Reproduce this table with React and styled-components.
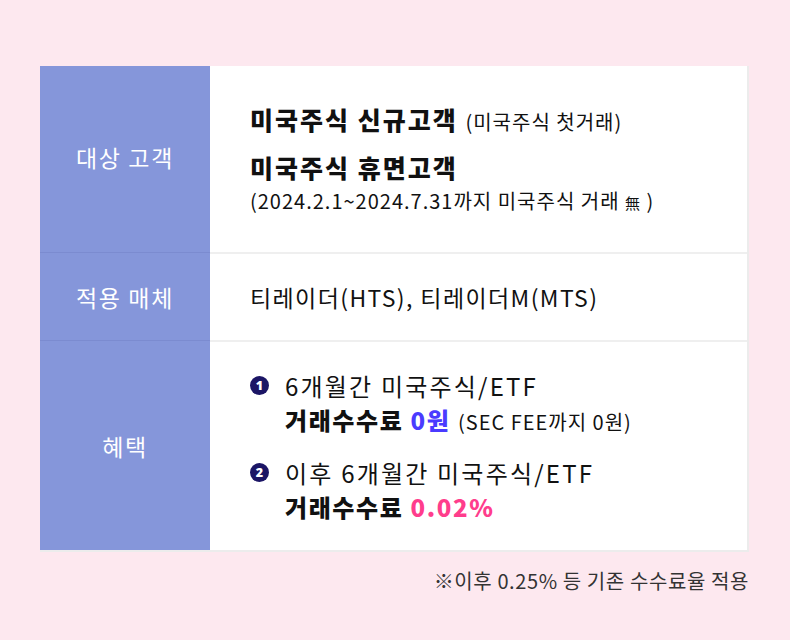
import styled, { createGlobalStyle } from 'styled-components';

const GlobalStyle = createGlobalStyle`
    html, body { margin: 0; padding: 0; }
    body {
        background: #fde8ef;
        font-family: "Noto Sans CJK KR", "Noto Sans", sans-serif;
        color: #111;
    }
`

const Page = styled.div`
    width: 790px;
    height: 640px;
    box-sizing: border-box;
    padding: 66px 41px 0 40px;
`

const Table = styled.div`
    display: grid;
    grid-template-columns: 170px 1fr;
    grid-template-rows: 186px 88px 210px;
    background: #fff;
    border-right: 2px solid #ececec;
    border-bottom: 2px solid #ececec;
`

const Head = styled.div`
    background: #8596da;
    color: #fff;
    font-size: 23px;
    letter-spacing: 1.6px;
    display: flex;
    align-items: center;
    justify-content: center;
    padding-bottom: ${p => (p.$first ? 4 : 0)}px;
    border-top: ${p => (p.$first ? 'none' : '1px solid #7b8bd0')};
`

const Cell = styled.div`
    display: flex;
    flex-direction: column;
    justify-content: center;
    padding-left: 40px;
    border-top: ${p => (p.$first ? 'none' : '2px solid #efefef')};
`

const Strong = styled.div`
    font-size: 25px;
    font-weight: 900;
    letter-spacing: 2px;
    line-height: 34px;
    margin-top: ${p => p.$gap || 0}px;
`

const Small = styled.span`
    font-size: ${p => p.$size || 20}px;
    font-weight: 400;
    letter-spacing: 1px;
`

const Note = styled.div`
    font-size: 20px;
    letter-spacing: 1px;
    line-height: 28px;
    margin-top: 3px;
`

const Plain = styled.div`
    font-size: 23px;
    letter-spacing: 1.4px;
`

const Benefit = styled.div`
    display: flex;
    align-items: flex-start;
    margin-top: ${p => p.$gap || 0}px;
`

const NumIcon = styled.svg`
    flex: none;
    display: block;
    width: 19px;
    height: 19px;
    margin: 7px 16px 0 0;
`

const Lines = styled.div`
    font-size: 24px;
    letter-spacing: 2.2px;
    line-height: 34px;
`

const Bold = styled.span`
    font-weight: 900;
    letter-spacing: 1.6px;
    color: ${p => p.$color || '#111'};
`

const Extra = styled.span`
    font-size: 20px;
    letter-spacing: 1px;
`

const Footer = styled.div`
    text-align: right;
    font-size: 20px;
    color: #333;
    letter-spacing: 0.6px;
    margin-top: 14px;
`

function Num({ n }){
    return(
        <NumIcon viewBox="0 0 19 19">
            <circle cx="9.5" cy="9.5" r="9.5" fill="#1b1565" />
            <text x="9.5" y="14" textAnchor="middle" fill="#fff" fontSize="12.5" fontWeight="900"
                fontFamily="'Noto Sans', sans-serif">{n}</text>
        </NumIcon>
    )
}

export default function App(){
    return(
        <>
        <GlobalStyle />
        <Page>
            <Table>
                <Head $first>대상 고객</Head>
                <Cell $first>
                    <Strong>미국주식 신규고객 <Small>(미국주식 첫거래)</Small></Strong>
                    <Strong $gap={11}>미국주식 휴면고객</Strong>
                    <Note>(2024.2.1~2024.7.31까지 미국주식 거래 <Small $size={15}>無</Small> )</Note>
                </Cell>

                <Head>적용 매체</Head>
                <Cell>
                    <Plain>티레이더(HTS), 티레이더M(MTS)</Plain>
                </Cell>

                <Head>혜택</Head>
                <Cell>
                    <Benefit>
                        <Num n="1" />
                        <Lines>
                            6개월간 미국주식/ETF<br />
                            <Bold>거래수수료 </Bold><Bold $color="#4a3bff">0원</Bold> <Extra>(SEC FEE까지 0원)</Extra>
                        </Lines>
                    </Benefit>
                    <Benefit $gap={17}>
                        <Num n="2" />
                        <Lines>
                            이후 6개월간 미국주식/ETF<br />
                            <Bold>거래수수료 </Bold><Bold $color="#ff3d8c">0.02%</Bold>
                        </Lines>
                    </Benefit>
                </Cell>
            </Table>
            <Footer>※이후 0.25% 등 기존 수수료율 적용</Footer>
        </Page>
        </>
    )
};
